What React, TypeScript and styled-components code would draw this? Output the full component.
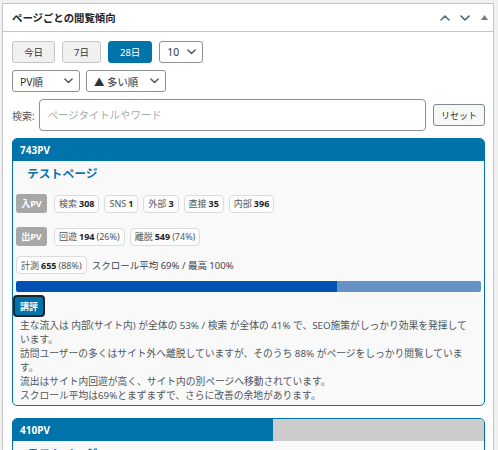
import React from "react";
import styled, {createGlobalStyle} from "styled-components";

const GlobalStyle = createGlobalStyle`
    html, body {
        margin: 0;
        padding: 0;
        overflow: hidden;
        background: #f0f0f1;
    }
    body {
        font-family: "Noto Sans", "Noto Sans CJK JP", sans-serif;
        color: #3c434a;
    }
    * {
        box-sizing: border-box;
    }
`;

const Panel = styled.div`
    margin: 3px 0 0 2px;
    width: 492px;
    border: 1px solid #c3c4c7;
    background: #fff;
`;

const PanelHeader = styled.div`
    display: flex;
    align-items: center;
    height: 28px;
    padding-left: 9px;
    border-bottom: 1px solid #c3c4c7;
`;

const PanelTitle = styled.h2`
    flex: 1;
    margin: 0;
    font-size: 10.4px;
    font-weight: 700;
    color: #1d2327;
`;

const HandleButton = styled.span<{ $w: number }>`
    display: flex;
    align-items: center;
    justify-content: center;
    width: ${p => p.$w}px;
    height: 27px;
`;

const PanelBody = styled.div`
    padding: 9px 8px 0 9px;
`;

const ControlRow = styled.div<{ $gap: number; $top?: number }>`
    display: flex;
    align-items: center;
    gap: ${p => p.$gap}px;
    margin-top: ${p => p.$top || 0}px;
`;

const RangeButton = styled.button<{ $active?: boolean }>`
    height: 22px;
    padding: 0 11px;
    font-family: inherit;
    font-size: 9.5px;
    color: ${p => p.$active ? "#fff" : "#2c3338"};
    background: ${p => p.$active ? "#0073aa" : "#f0f0f1"};
    border: 1px solid ${p => p.$active ? "#0073aa" : "#c3c4c7"};
    border-radius: 3px;
`;

const SelectBox = styled.div<{ $w: number }>`
    display: flex;
    align-items: center;
    justify-content: space-between;
    width: ${p => p.$w}px;
    height: 22px;
    padding: 0 6px 0 7px;
    font-size: 10.4px;
    color: #2c3338;
    background: #fff;
    border: 1px solid #8c8f94;
    border-radius: 3px;
`;

const SearchLabel = styled.label`
    font-size: 10px;
    color: #50575e;
`;

const SearchInput = styled.input`
    flex: 1;
    height: 32px;
    padding: 0 8px;
    font-family: inherit;
    font-size: 10.4px;
    color: #2c3338;
    border: 1px solid #8c8f94;
    border-radius: 4px;
    outline: none;

    &::placeholder {
        color: #a7aaad;
    }
`;

const ResetButton = styled.button`
    height: 22px;
    margin-left: 3px;
    padding: 0 7px;
    font-family: inherit;
    font-size: 9px;
    color: #2c3338;
    background: #f6f7f7;
    border: 1px solid #7e8993;
    border-radius: 3px;
`;

const Card = styled.div<{ $top: number }>`
    margin-top: ${p => p.$top}px;
    border: 1px solid #0073aa;
    border-radius: 5px;
    background: #f9f9f9;
    overflow: hidden;
`;

const CardHeader = styled.div<{ $ratio: number }>`
    display: flex;
    align-items: center;
    height: 22px;
    padding-left: 7px;
    font-size: 10px;
    font-weight: 700;
    color: #fff;
    background: linear-gradient(to right, #0073aa ${p => p.$ratio}%, #cccccc ${p => p.$ratio}%);
`;

const PageTitle = styled.div`
    margin: 2px 0 0 14px;
    line-height: 20px;
    font-size: 11.8px;
    font-weight: 700;
    color: #0a72a8;
`;

const MetricRow = styled.div<{ $top: number }>`
    display: flex;
    align-items: center;
    gap: 5px;
    margin: ${p => p.$top}px 0 0 3px;
    font-size: 9px;
`;

const FlowBadge = styled.span`
    display: flex;
    align-items: center;
    justify-content: center;
    width: 31px;
    height: 19px;
    margin-right: 2px;
    font-size: 9px;
    font-weight: 700;
    color: #fff;
    background: #a7a7a7;
    border-radius: 3px;
`;

const Chip = styled.span`
    display: flex;
    align-items: center;
    gap: 2px;
    height: 18px;
    padding: 0 4px;
    color: #50575e;
    background: #fcfcfc;
    border: 1px solid #dcdcde;
    border-radius: 4px;
`;

const ChipValue = styled.b`
    color: #1d2327;
`;

const ScrollNote = styled.span`
    font-size: 9.5px;
    color: #3c434a;
`;

const ScrollBar = styled.div<{ $pct: number }>`
    height: 11px;
    margin: 7px 3px 0;
    border-radius: 2px;
    background: linear-gradient(to right, #0052b4 ${p => p.$pct}%, #6592c5 ${p => p.$pct}%);
`;

const ReviewBlock = styled.div`
    display: flex;
    flex-direction: column;
    align-items: flex-start;
`;

const ReviewBadge = styled.span`
    display: inline-flex;
    align-items: center;
    justify-content: center;
    width: 32px;
    height: 22px;
    margin-top: 3px;
    font-size: 9px;
    font-weight: 700;
    color: #fff;
    background: #0073aa;
    border: 2px solid #1d2327;
    border-radius: 4px;
`;

const Comment = styled.div`
    margin-top: 2px;
    padding: 0 13px 2px 7px;
    font-size: 9.75px;
    line-height: 14px;
    color: #50575e;
`;

function Chevron({up, color = "#50575e", w = 10}: { up?: boolean; color?: string; w?: number }) {
    return (
        <svg width={w} height={w * 0.6} viewBox="0 0 10 6">
            <polyline points={up ? "1,5 5,1 9,5" : "1,1 5,5 9,1"} fill="none" stroke={color}
                      strokeWidth={1.6} strokeLinecap="round" strokeLinejoin="round"/>
        </svg>
    );
}

interface iPageRow {
    pv: number;
    title: string;
    inflow: [string, number][];
    outflow: { label: string; value: number; pct: number }[];
    measured: { value: number; pct: number };
    scrollAvg: number;
    scrollMax: number;
    comments: string[];
}

const pages: iPageRow[] = [
    {
        pv: 743,
        title: "テストページ",
        inflow: [["検索", 308], ["SNS", 1], ["外部", 3], ["直接", 35], ["内部", 396]],
        outflow: [{label: "回遊", value: 194, pct: 26}, {label: "離脱", value: 549, pct: 74}],
        measured: {value: 655, pct: 88},
        scrollAvg: 69,
        scrollMax: 100,
        comments: [
            "主な流入は 内部(サイト内) が全体の 53% / 検索 が全体の 41% で、SEO施策がしっかり効果を発揮しています。",
            "訪問ユーザーの多くはサイト外へ離脱していますが、そのうち 88% がページをしっかり閲覧しています。",
            "流出はサイト内回遊が高く、サイト内の別ページへ移動されています。",
            "スクロール平均は69%とまずまずで、さらに改善の余地があります。",
        ],
    },
    {
        pv: 410,
        title: "テストページ",
        inflow: [["検索", 172], ["SNS", 2], ["外部", 5], ["直接", 21], ["内部", 210]],
        outflow: [{label: "回遊", value: 120, pct: 29}, {label: "離脱", value: 290, pct: 71}],
        measured: {value: 352, pct: 86},
        scrollAvg: 64,
        scrollMax: 100,
        comments: ["主な流入は 内部(サイト内) が全体の 51% です。"],
    },
];

function PageCard({page, maxPv, top}: { page: iPageRow; maxPv: number; top: number }) {
    return (
        <Card $top={top}>
            <CardHeader $ratio={page.pv / maxPv * 100}>{page.pv}PV</CardHeader>
            <PageTitle>{page.title}</PageTitle>
            <MetricRow $top={11}>
                <FlowBadge>入PV</FlowBadge>
                {page.inflow.map(([label, value]) =>
                    <Chip key={label}>{label} <ChipValue>{value}</ChipValue></Chip>
                )}
            </MetricRow>
            <MetricRow $top={14}>
                <FlowBadge>出PV</FlowBadge>
                {page.outflow.map(item =>
                    <Chip key={item.label}>{item.label} <ChipValue>{item.value}</ChipValue> ({item.pct}%)</Chip>
                )}
            </MetricRow>
            <MetricRow $top={10}>
                <Chip>計測 <ChipValue>{page.measured.value}</ChipValue> ({page.measured.pct}%)</Chip>
                <ScrollNote>スクロール平均 {page.scrollAvg}% / 最高 {page.scrollMax}%</ScrollNote>
            </MetricRow>
            <ScrollBar $pct={page.scrollAvg}/>
            <ReviewBlock>
                <ReviewBadge>講評</ReviewBadge>
                <Comment>
                    {page.comments.map((line, idx) => <div key={idx}>{line}</div>)}
                </Comment>
            </ReviewBlock>
        </Card>
    );
}

export default function App() {
    const maxPv = Math.max(...pages.map(p => p.pv));
    return (
        <>
            <GlobalStyle/>
            <Panel>
                <PanelHeader>
                    <PanelTitle>ページごとの閲覧傾向</PanelTitle>
                    <HandleButton $w={20}><Chevron up color="#5b6d80"/></HandleButton>
                    <HandleButton $w={20}><Chevron color="#44607c"/></HandleButton>
                    <HandleButton $w={18}>
                        <svg width="7" height="5" viewBox="0 0 7 5"><polygon points="3.5,0 7,5 0,5" fill="#787c82"/></svg>
                    </HandleButton>
                </PanelHeader>
                <PanelBody>
                    <ControlRow $gap={7}>
                        <RangeButton>今日</RangeButton>
                        <RangeButton>7日</RangeButton>
                        <RangeButton $active>28日</RangeButton>
                        <SelectBox $w={44}>10 <Chevron w={9}/></SelectBox>
                    </ControlRow>
                    <ControlRow $gap={6} $top={7}>
                        <SelectBox $w={68}>PV順 <Chevron w={9}/></SelectBox>
                        <SelectBox $w={80}>▲ 多い順 <Chevron w={9}/></SelectBox>
                    </ControlRow>
                    <ControlRow $gap={4} $top={7}>
                        <SearchLabel>検索:</SearchLabel>
                        <SearchInput placeholder="ページタイトルやワード"/>
                        <ResetButton>リセット</ResetButton>
                    </ControlRow>
                    {pages.map((page, idx) =>
                        <PageCard key={idx} page={page} maxPv={maxPv} top={idx === 0 ? 7 : 12}/>
                    )}
                </PanelBody>
            </Panel>
        </>
    );
}
